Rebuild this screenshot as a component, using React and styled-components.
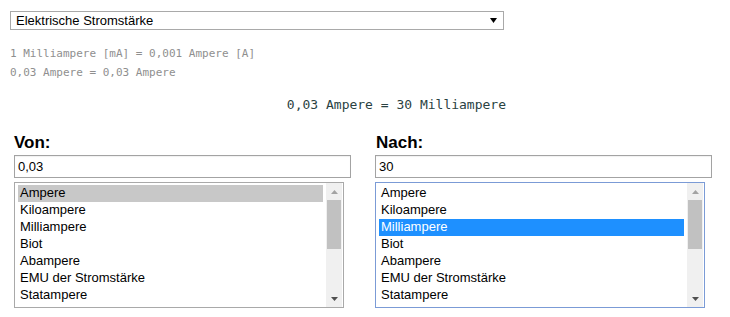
import React from "react";
import styled, { createGlobalStyle } from "styled-components";

const Global = createGlobalStyle`
  html, body { margin: 0; padding: 0; background: #fff; }
  body { font-family: "Liberation Sans", Arial, sans-serif; color: #000; }
`;

const Page = styled.div`
  padding: 11px 0 0 10px;
  width: 720px;
  box-sizing: border-box;
`;

const UnitSelect = styled.div`
  box-sizing: border-box;
  width: 494px;
  height: 19px;
  border: 1px solid #a9a9a9;
  display: flex;
  align-items: center;
  justify-content: space-between;
  padding: 0 6px 0 5px;
  font-size: 13px;
  line-height: 17px;
`;

const Info = styled.div`
  margin-top: 14px;
  font-family: "DejaVu Sans Mono", "Liberation Mono", monospace;
  font-size: 11px;
  line-height: 19px;
  color: #8f8f8f;
`;

const Result = styled.div`
  width: 496px;
  margin-top: 13px;
  text-align: right;
  font-family: "DejaVu Sans Mono", "Liberation Mono", monospace;
  font-size: 13px;
  line-height: 20px;
  color: #2a4242;
`;

const Columns = styled.div`
  display: grid;
  grid-template-columns: 337px 337px;
  column-gap: 24px;
  margin: 18px 0 0 4px;
`;

const Column = styled.div`
  display: flex;
  flex-direction: column;
`;

const Label = styled.div`
  font-size: 17px;
  font-weight: bold;
  line-height: 20px;
  padding-left: ${(p) => p.$indent || 0}px;
`;

const NumberInput = styled.div`
  box-sizing: border-box;
  margin-top: 2px;
  height: 23px;
  border: 1px solid #a3a3a3;
  box-shadow: inset 0 1px 1px rgba(0, 0, 0, 0.06);
  font-size: 13px;
  line-height: 21px;
  padding-left: 3px;
`;

const ListBox = styled.div`
  box-sizing: border-box;
  margin-top: 4px;
  width: 330px;
  height: 126px;
  border: 1px solid ${(p) => (p.$focused ? "#7b9bd6" : "#a9a9a9")};
  display: flex;
  overflow: hidden;
`;

const Rows = styled.div`
  flex: 1;
  padding: 2px 3px 0 3px;
  overflow: hidden;
`;

const Row = styled.div`
  box-sizing: border-box;
  height: 17px;
  line-height: 15px;
  font-size: 13px;
  padding-left: 2px;
  white-space: nowrap;
  background: ${(p) => (p.$sel === "gray" ? "#c8c8c8" : p.$sel === "blue" ? "#1e90ff" : "transparent")};
  color: ${(p) => (p.$sel === "blue" ? "#fff" : "#000")};
`;

const Scrollbar = styled.div`
  width: 16px;
  margin-right: 1px;
  background: #f0f0f0;
  display: flex;
  flex-direction: column;
  align-items: center;
`;

const Arrow = styled.div`
  height: 17px;
  width: 100%;
  display: flex;
  align-items: center;
  justify-content: center;
`;

const Thumb = styled.div`
  width: 14px;
  height: 49px;
  background: #c1c1c1;
`;

const Spacer = styled.div`
  flex: 1;
`;

const units = [
  "Ampere",
  "Kiloampere",
  "Milliampere",
  "Biot",
  "Abampere",
  "EMU der Stromstärke",
  "Statampere",
  "ESU der Stromstärke",
  "Gilbert",
];

function Tri({ down }) {
  return (
    <svg width="7" height="4" viewBox="0 0 7 4">
      <path d={down ? "M0 0 H7 L3.5 4 Z" : "M0 4 H7 L3.5 0 Z"} fill={down ? "#505050" : "#a3a3a3"} />
    </svg>
  );
}

function List({ selected, kind, focused }) {
  return (
    <ListBox $focused={focused}>
      <Rows>
        {units.map((u) => (
          <Row key={u} $sel={u === selected ? kind : undefined}>
            {u}
          </Row>
        ))}
      </Rows>
      <Scrollbar>
        <Arrow>
          <Tri />
        </Arrow>
        <Thumb />
        <Spacer />
        <Arrow>
          <Tri down />
        </Arrow>
      </Scrollbar>
    </ListBox>
  );
}

export default function App() {
  return (
    <>
      <Global />
      <Page>
        <UnitSelect>
          <span>Elektrische Stromstärke</span>
          <svg width="7" height="5" viewBox="0 0 7 5">
            <path d="M0 0 H7 L3.5 5 Z" fill="#000" />
          </svg>
        </UnitSelect>
        <Info>
          <div>1 Milliampere [mA] = 0,001 Ampere [A]</div>
          <div>0,03 Ampere = 0,03 Ampere</div>
        </Info>
        <Result>0,03 Ampere = 30 Milliampere</Result>
        <Columns>
          <Column>
            <Label>Von:</Label>
            <NumberInput>0,03</NumberInput>
            <List selected="Ampere" kind="gray" />
          </Column>
          <Column>
            <Label $indent={1}>Nach:</Label>
            <NumberInput>30</NumberInput>
            <List selected="Milliampere" kind="blue" focused />
          </Column>
        </Columns>
      </Page>
    </>
  );
}
